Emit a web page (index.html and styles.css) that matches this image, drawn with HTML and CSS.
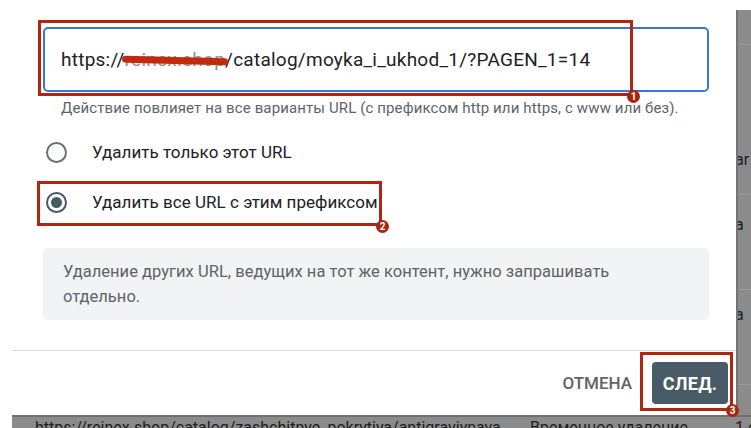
FILE: index.html
```html
<!DOCTYPE html>
<html lang="ru">
<head>
<meta charset="utf-8">
<title>Удаление URL</title>
<link rel="stylesheet" href="styles.css">
</head>
<body>
<div class="screen">
  <div class="top">
    <div class="gutter"></div>
    <div class="dialog">
      <div class="body">
        <div class="field-wrap">
          <div class="field">https://<span class="redact">reinex.shop</span>/catalog/moyka_i_ukhod_1/?PAGEN_1=14</div>
          <div class="mark mark-1"><span class="badge">1</span></div>
        </div>
        <p class="hint">Действие повлияет на все варианты URL (с префиксом http или https, с www или без).</p>
        <div class="options">
          <label class="option">
            <span class="radio"></span>
            <span class="option-text">Удалить только этот URL</span>
          </label>
          <label class="option">
            <span class="radio checked"></span>
            <span class="option-text">Удалить все URL с этим префиксом</span>
            <span class="mark mark-2"><span class="badge">2</span></span>
          </label>
        </div>
        <div class="note">Удаление других URL, ведущих на тот же контент, нужно запрашивать отдельно.</div>
      </div>
      <div class="footer">
        <button class="btn-text">ОТМЕНА</button>
        <div class="next-wrap">
          <button class="btn-primary">СЛЕД.</button>
          <div class="mark mark-3"><span class="badge">3</span></div>
        </div>
      </div>
    </div>
    <div class="side">
      <div class="side-row r1"></div>
      <div class="side-row r2"><span>ar</span></div>
      <div class="side-row r3"><span>a</span></div>
      <div class="side-row r4"><span>a</span></div>
      <div class="side-row r5"></div>
    </div>
  </div>
  <div class="bottom">
    <div class="gutter"></div>
    <div class="table-row">
      <span class="c1">https://reinex.shop/catalog/zashchitnye_pokrytiya/antigraviynaya</span>
      <span class="c2">Временное удаление</span>
      <span class="c3">1 с</span>
    </div>
  </div>
</div>
</body>
</html>
```
FILE: styles.css
```css
* { box-sizing: border-box; }
html, body { margin: 0; padding: 0; background: #fff; }
body { font-family: Roboto, "Noto Sans", "Liberation Sans", sans-serif; color: #202124; }

.screen { width: 751px; height: 428px; overflow: hidden; display: flex; flex-direction: column; }
.top { display: flex; height: 415px; flex: none; }
.gutter { width: 12px; flex: none; background: #fff; }

.dialog { width: 724px; flex: none; background: #fff; display: flex; flex-direction: column; }
.body { padding: 27px 27px 0 31px; flex: 1; }

.field-wrap { position: relative; }
.field {
  height: 65px;
  border: 2px solid #3a76d6;
  border-radius: 5px;
  padding-left: 16px;
  display: flex; align-items: center;
  font-size: 19px;
  letter-spacing: 0.25px;
  color: #202124;
  white-space: nowrap;
}
.redact { position: relative; color: #8f8f8f; }
.redact::after {
  content: ""; position: absolute;
  left: -3px; right: -2px; top: 9px; height: 7px;
  background: #c22a10; border-radius: 4px;
  transform: rotate(1.5deg);
}

.mark { position: absolute; border: 3px solid #b0260e; pointer-events: none; }
.badge {
  position: absolute; width: 13px; height: 13px; border-radius: 50%;
  background: #a8260f; color: #fff; font-size: 10px; font-weight: 700;
  display: flex; align-items: center; justify-content: center; line-height: 1;
}
.mark-1 { left: -5px; top: -7px; width: 595px; height: 76px; }
.mark-1 .badge { right: -10px; bottom: -10px; }

.hint { margin: 7px 0 0 18px; font-size: 15px; color: #5f6368; line-height: 18px; letter-spacing: 0.12px; white-space: nowrap; }

.options { margin-top: 25px; display: flex; flex-direction: column; gap: 30px; padding-left: 3px; }
.option { position: relative; display: flex; align-items: center; height: 20px; }
.radio {
  width: 21px; height: 21px; border-radius: 50%;
  border: 2px solid #6b6f73; flex: none;
  display: flex; align-items: center; justify-content: center;
}
.radio.checked { border-color: #455a64; }
.radio.checked::before { content: ""; width: 11px; height: 11px; border-radius: 50%; background: #455a64; }
.option-text { margin-left: 25px; font-size: 17px; color: #202124; letter-spacing: 0.03px; white-space: nowrap; }
.mark-2 { left: -9px; top: -11px; width: 345px; height: 45px; }
.mark-2 .badge { right: -10px; bottom: -10px; }

.note {
  margin-top: 36px; background: #f1f3f4; border-radius: 5px;
  padding: 11px 70px 11px 20px; height: 72px;
  font-size: 16.5px; line-height: 25px; color: #5f6368; letter-spacing: 0.03px;
}

.footer {
  border-top: 1px solid #d9dbde;
  height: 65px;
  display: flex; align-items: center; justify-content: flex-end;
  padding: 0 8px 0 0;
  gap: 20px;
}
.btn-text {
  border: 0; background: none; padding: 0; font-family: inherit;
  font-size: 17px; font-weight: 500; color: #5f6368; letter-spacing: 0;
}
.next-wrap { position: relative; }
.btn-primary {
  display: block; width: 76px; height: 42px; border: 0; border-radius: 4px;
  background: #485b66; color: #fff; font-family: inherit;
  font-size: 18px; font-weight: 700; letter-spacing: 0.3px; padding: 0;
}
.mark-3 { left: -12px; top: -10px; width: 93px; height: 59px; }
.mark-3 .badge { right: -9px; bottom: -9px; }

.side { flex: 1; background: #8b8b8b; border-left: 2px solid #737373; margin-top: 10px; display: flex; flex-direction: column; overflow: hidden; }
.side-row { border-bottom: 1px solid #9a9a9a; font-size: 16px; line-height: 20px; color: #1e1e1e; display: flex; align-items: flex-start; }
.side-row span { margin-left: -3px; }
.r1 { height: 35px; }
.r2 { height: 150px; padding-top: 105px; }
.r3 { height: 95px; padding-top: 20px; }
.r4 { height: 95px; padding-top: 15px; }
.r5 { flex: 1; border-bottom: 0; }

.bottom { display: flex; flex: 1; min-height: 0; overflow: hidden; }
.table-row {
  flex: 1; background: #8b8b8b; border-top: 2px solid #6f6f6f;
  overflow: hidden; font-size: 16px; line-height: 20px; color: #1e1e1e;
  white-space: nowrap; display: flex; padding-top: 1px;
}
.c1 { margin-left: 23px; width: 495px; flex: none; overflow: hidden; }
.c2 { width: 205px; flex: none; }
.c3 { flex: none; }
```
